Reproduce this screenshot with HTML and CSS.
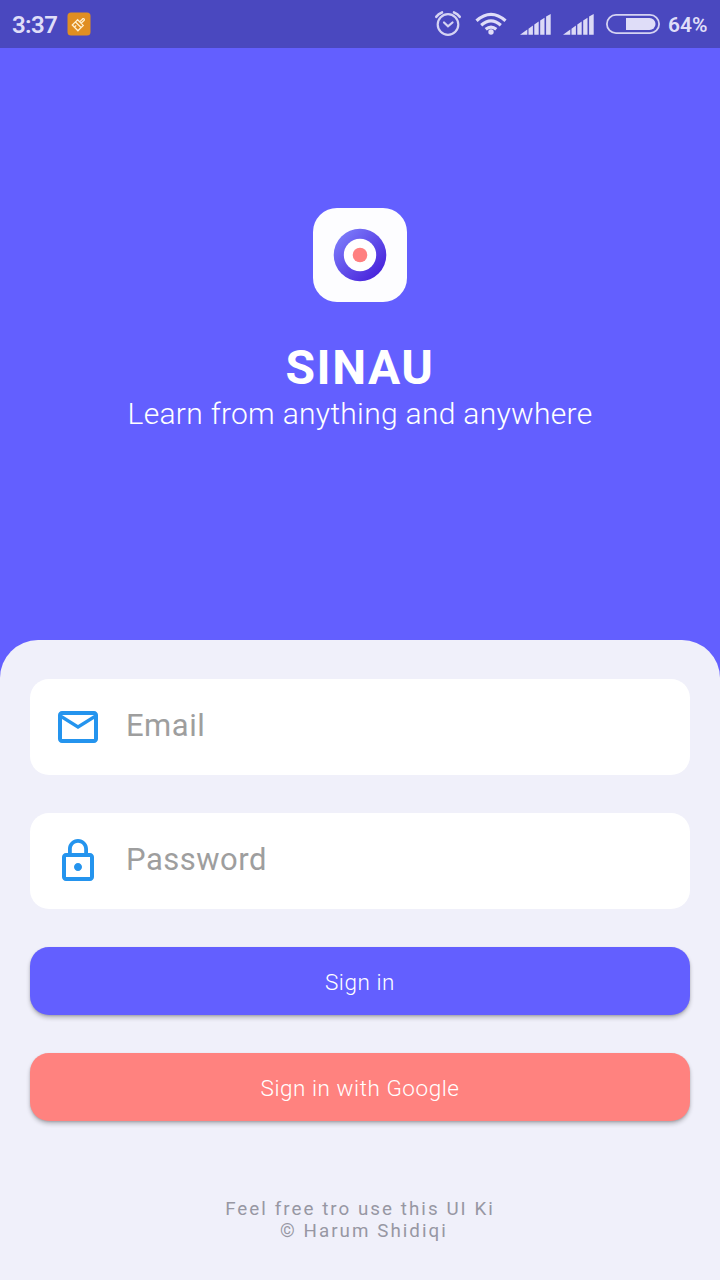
FILE: index.html
```html
<!DOCTYPE html>
<html lang="en">
<head>
<meta charset="utf-8">
<title>Sinau</title>
<link rel="stylesheet" href="styles.css">
</head>
<body>
<div class="screen">
  <header class="status">
    <span class="clock">3:37</span>
    <svg class="cleaner" width="24" height="24" viewBox="0 0 24 24">
      <rect x="0.5" y="0.5" width="23" height="23" rx="3.5" fill="#e08e22"/>
      <g transform="translate(12 12) rotate(45)" fill="none" stroke="#fff0cf" stroke-width="1.3">
        <path d="M-1-2V-6.500Q0-8 1-6.500V-2M-4-2H4V1H-4ZM-4 1V5.500H4V1M-1 3V5.500"/>
      </g>
    </svg>
    <div class="indicators">
      <svg class="alarm" width="28" height="28" viewBox="0 0 28 28" fill="none" stroke="#d5d3f3" stroke-width="2.200" stroke-linecap="round">
        <circle cx="14" cy="14.500" r="10.300"/>
        <path d="M10 12.500L14 16.300L18.500 12.500"/>
        <path d="M2.300 6.800Q4.300 3.600 8 2.400M25.700 6.800Q23.700 3.600 20 2.400" stroke-width="2.600"/>
      </svg>
      <svg class="wifi" width="32" height="24" viewBox="0 0 32 24" fill="none" stroke="#dfddf8" stroke-width="3.200">
        <path d="M1.500 8.800Q16-4 30.500 8.800"/>
        <path d="M6.200 13.300Q16 4.600 25.800 13.300"/>
        <path d="M10.700 17.300Q16 12.900 21.300 17.300"/>
        <circle cx="16" cy="20" r="2.700" fill="#dfddf8" stroke="none"/>
      </svg>
      <svg class="signal" width="31" height="21" viewBox="0 0 31 21" fill="#dcdaf6">
        <path d="M0 20.800L7.300 15.500V20.800ZM8.500 14.700L12.900 11.500V20.800H8.500ZM14.300 10.500L18.700 7.600V20.800H14.300ZM20.200 6.600L24.500 3.700V20.800H20.200ZM26.100 2.500L30.700 0V20.800H26.100Z"/>
      </svg>
      <svg class="signal signal-second" width="31" height="21" viewBox="0 0 31 21" fill="#dcdaf6">
        <path d="M0 20.800L7.300 15.500V20.800ZM8.500 14.700L12.900 11.500V20.800H8.500ZM14.300 10.500L18.700 7.600V20.800H14.300ZM20.200 6.600L24.500 3.700V20.800H20.200ZM26.100 2.500L30.700 0V20.800H26.100Z"/>
      </svg>
      <svg class="battery" width="54" height="20" viewBox="0 0 54 20">
        <rect x="0.900" y="0.900" width="52.200" height="18.200" rx="9.100" fill="none" stroke="#d5d3f2" stroke-width="1.800"/>
        <path d="M20 4H43.500A6 6 0 0 1 43.500 16H20Z" fill="#dfddf8"/>
      </svg>
      <span class="percent">64%</span>
    </div>
  </header>

  <section class="hero">
    <svg class="logo" width="94" height="94" viewBox="0 0 94 94">
      <defs>
        <linearGradient id="ring" x1="0.100" y1="0.100" x2="0.850" y2="0.850">
          <stop offset="0" stop-color="#7c7cfa"/>
          <stop offset="1" stop-color="#4a26dc"/>
        </linearGradient>
      </defs>
      <rect width="94" height="94" rx="24" fill="#fdfdff"/>
      <circle cx="47" cy="47" r="26.300" fill="url(#ring)"/>
      <circle cx="47" cy="47" r="16.200" fill="#fff"/>
      <circle cx="47" cy="47" r="7.300" fill="#ff8080"/>
    </svg>
    <h1 class="title">SINAU</h1>
    <p class="tagline">Learn from anything and anywhere</p>
  </section>

  <main class="sheet">
    <div class="field">
      <svg class="field-icon" viewBox="0 0 24 24" fill="#2494ee">
        <path d="M20 4H4c-1.100 0-1.990.9-1.990 2L2 18c0 1.100.9 2 2 2h16c1.100 0 2-.9 2-2V6c0-1.100-.9-2-2-2zm0 14H4V8l8 5 8-5v10zm-8-7L4 6h16l-8 5z"/>
      </svg>
      <span class="placeholder">Email</span>
    </div>
    <div class="field">
      <svg class="field-icon" viewBox="0 0 24 24" fill="#2494ee">
        <path d="M12 17c1.100 0 2-.9 2-2s-.9-2-2-2-2 .9-2 2 .9 2 2 2zm6-9h-1V6c0-2.760-2.240-5-5-5S7 3.240 7 6v2H6c-1.100 0-2 .9-2 2v10c0 1.100.9 2 2 2h12c1.100 0 2-.9 2-2V10c0-1.100-.9-2-2-2zM8.900 6c0-1.710 1.390-3.100 3.100-3.100s3.100 1.390 3.100 3.100v2H8.900V6zM18 20H6V10h12v10z"/>
      </svg>
      <span class="placeholder">Password</span>
    </div>
    <button class="button button-primary">Sign in</button>
    <button class="button button-google">Sign in with Google</button>
    <footer class="credits">
      <div>Feel free tro use this UI Ki</div>
      <div class="author">© Harum Shidiqi</div>
    </footer>
  </main>
</div>
</body>
</html>
```
FILE: styles.css
```css
* { box-sizing: border-box; }
body { margin: 0; font-family: Roboto, "Liberation Sans", sans-serif; }
svg { display: block; flex: none; }
.screen {
  width: 720px;
  height: 1280px;
  display: flex;
  flex-direction: column;
  background: #635fff;
  overflow: hidden;
}
.status {
  height: 48px;
  flex: none;
  display: flex;
  align-items: center;
  padding: 0 13px 0 12px;
  background: #4a48bf;
  color: #dfddf8;
}
.clock { width: 55px; font-size: 24px; font-weight: 600; line-height: 28px; padding-top: 2px; white-space: nowrap; letter-spacing: -0.6px; }
.indicators { margin-left: auto; display: flex; align-items: center; }
.alarm { margin-right: 13px; }
.wifi { margin-right: 13px; }
.signal { margin: 0 12px 0 0; }
.battery { margin-right: 8px; }
.percent { width: 39px; font-size: 21px; font-weight: 600; line-height: 24px; padding-top: 2px; white-space: nowrap; }
.hero {
  height: 592px;
  flex: none;
  display: flex;
  flex-direction: column;
  align-items: center;
  padding-top: 160px;
  color: #fff;
}
.title { margin: 38px 0 0; font-size: 48px; line-height: 56px; font-weight: 700; letter-spacing: 1.5px; }
.tagline { margin: 0; font-size: 30px; line-height: 36px; font-weight: 300; letter-spacing: 0.3px; white-space: nowrap; }
.sheet {
  flex: 1;
  display: flex;
  flex-direction: column;
  padding: 39px 30px 0;
  background: #f0f0fa;
  border-radius: 38px 38px 0 0;
}
.field {
  height: 96px;
  flex: none;
  margin-bottom: 38px;
  padding-left: 24px;
  display: flex;
  align-items: center;
  gap: 24px;
  background: #fff;
  border-radius: 19px;
}
.field-icon { width: 48px; height: 48px; }
.placeholder { font-size: 31px; line-height: 36px; padding-bottom: 3px; letter-spacing: 0.5px; color: #9e9e9e; }
.button {
  height: 68px;
  flex: none;
  margin: 0 0 38px;
  padding: 1px 0 0;
  border: 0;
  border-radius: 19px;
  font: 300 22.5px/26px Roboto, "Liberation Sans", sans-serif;
  letter-spacing: 0.55px;
  color: #fff;
  box-shadow: 0 3px 4px rgba(0, 0, 0, 0.22), 0 1px 2px rgba(0, 0, 0, 0.14);
}
.button-primary { background: #635fff; }
.button-google { background: #ff827f; }
.credits {
  margin-top: 39px;
  font-size: 18.75px;
  line-height: 22px;
  letter-spacing: 2.05px;
  text-align: center;
  color: #9797a3;
}
.author { padding-left: 8px; }
```
